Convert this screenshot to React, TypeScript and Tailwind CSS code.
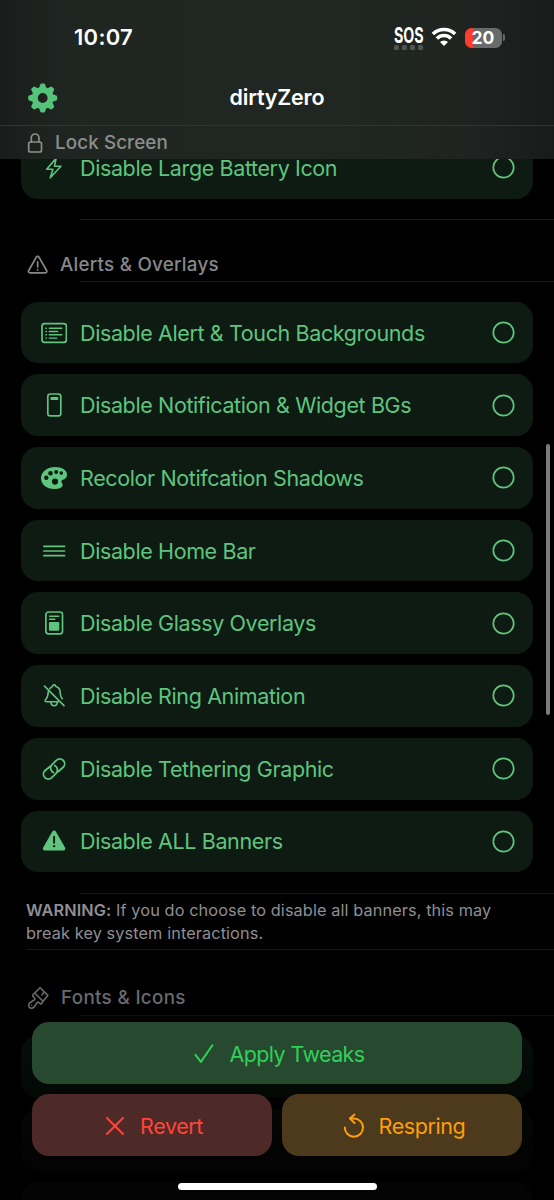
import type { ReactNode } from "react";

const stroke = {
  fill: "none",
  stroke: "currentColor",
  strokeWidth: 1.7,
  strokeLinecap: "round" as const,
  strokeLinejoin: "round" as const,
};

const BoltIcon = () => (
  <svg width="26" height="26" viewBox="0 0 26 26" {...stroke} strokeWidth="1.6">
    <path d="M15.2 3.2 5.700 14.200h6.200l-2.600 8.600 10.600-11.600h-6.400z" />
  </svg>
);

const ListIcon = () => (
  <svg width="26" height="26" viewBox="0 0 26 26" {...stroke}>
    <rect x="1" y="3.600" width="24.400" height="18.800" rx="2.600" />
    <path strokeWidth="1.400" d="M8.300 8.200h12.600M8.300 11.500h8.400M8.300 14.800h12.600M8.300 18.100h7.400M4.900 8.200h.5M4.900 11.500h.5M4.900 14.800h.5M4.900 18.100h.5" />
  </svg>
);

const PhoneIcon = () => (
  <svg width="26" height="26" viewBox="0 0 26 26" {...stroke}>
    <rect x="6.800" y="2" width="13" height="21.800" rx="2.400" />
    <rect x="9.600" y="4.900" width="7.600" height="3.200" rx="0.600" fill="currentColor" stroke="none" />
  </svg>
);

const PaletteIcon = () => (
  <svg width="26" height="26" viewBox="0 0 26 26" fill="currentColor">
    <path
      fillRule="evenodd"
      d="M14.200 2C6.500 2 0 6.800 0 13.300c0 6.300 5.800 10.700 13.200 10.700 5 0 8.500-1.500 8.500-4 0-1.500-1.200-2.200-1.200-3.500 0-1.400 1.100-1.600 2.600-2.200 1.900-.8 2.900-2.300 2.900-4.500C26 5 20.800 2 14.200 2zM5.300 10.600a2.200 2.200 0 1 1 0 4.400 2.200 2.200 0 0 1 0-4.400zM9.500 6a2.300 2.300 0 1 1 0 4.600 2.300 2.300 0 0 1 0-4.600zM15.200 5a2 2 0 1 1 0 4 2 2 0 0 1 0-4zM20.300 6.300a1.800 1.800 0 1 1 0 3.600 1.800 1.800 0 0 1 0-3.600zM14 13.500a3.100 3.100 0 1 1 0 6.200 3.100 3.100 0 0 1 0-6.200z"
    />
  </svg>
);

const LinesIcon = () => (
  <svg width="26" height="26" viewBox="0 0 26 26" {...stroke}>
    <path d="M2.900 8.300h20.600M2.900 13h20.600M2.900 17.700h20.600" />
  </svg>
);

const DocIcon = () => (
  <svg width="26" height="26" viewBox="0 0 26 26" {...stroke}>
    <rect x="4.900" y="2" width="16.600" height="21.800" rx="2.600" />
    <path strokeWidth="1.400" d="M8.500 6.300h9.200M8.500 9.300h5.400" />
    <rect x="7.900" y="12" width="10.400" height="8.700" rx="1" fill="currentColor" stroke="none" />
  </svg>
);

const BellSlashIcon = () => (
  <svg width="26" height="26" viewBox="0 0 26 26" {...stroke} strokeWidth="1.600">
    <path d="M8.700 5.800C9.500 4.500 10.500 4 11.300 3.600 11.600 2.400 12.300 1.900 13.100 1.900s1.500.5 1.800 1.700c2.900.9 4.300 3.300 4.300 6.200 0 2.700.8 4.500 2 6" />
    <path d="M7.300 8.400c-.2 3.900-.6 5.700-2.300 7.600-1.400 1.500-1 2.700.3 2.700H17.300" />
    <path d="M9.800 19.200c.3 2.300 1.400 3.600 3.300 3.600s3-1.300 3.300-3.600" />
    <path d="M3.500 3.100 23 22.600" />
  </svg>
);

const LinkIcon = () => (
  <svg width="26" height="26" viewBox="0 0 26 26" {...stroke} strokeWidth="1.800">
    <path d="M9.300 10.300 3.900 14.700a4.900 4.900 0 0 0 0 6.900 4.900 4.900 0 0 0 6.900 0l4.300-4.300a4.900 4.900 0 0 0-1.400-7.800" />
    <path d="m17 15.800 5.200-4.500a4.900 4.900 0 0 0 0-6.900 4.900 4.900 0 0 0-6.900 0L11 8.700a4.900 4.900 0 0 0 1.400 7.800" />
  </svg>
);

const WarnFillIcon = () => (
  <svg width="26" height="26" viewBox="0 0 26 26">
    <path
      d="M11.200 3.700 2.200 19.400c-.9 1.600-.1 3 1.600 3h18.600c1.700 0 2.500-1.400 1.600-3L15 3.700c-.9-1.500-2.900-1.500-3.800 0z"
      fill="currentColor"
    />
    <path d="M13.100 8.700v6" stroke="#0e1b12" strokeWidth="1.900" strokeLinecap="round" />
    <circle cx="13.100" cy="18.100" r="1.200" fill="#0e1b12" />
  </svg>
);

const RingIcon = () => (
  <svg className="shrink-0" width="23" height="23" viewBox="0 0 23 23" {...stroke}>
    <circle cx="11.500" cy="11.500" r="10.200" />
  </svg>
);

const LockIcon = () => (
  <svg width="18" height="22" viewBox="0 0 18 22" {...stroke}>
    <rect x="2.700" y="10" width="12.800" height="10" rx="1.800" />
    <path d="M5.300 10V5.800a3.800 3.800 0 0 1 7.600 0V10" />
  </svg>
);

const WarnIcon = () => (
  <svg width="22" height="22" viewBox="0 0 22 22" {...stroke}>
    <path d="M9.200 3.300 1.700 16.500c-.7 1.300 0 2.300 1.200 2.300h15.500c1.200 0 1.900-1 1.200-2.300L12.100 3.300c-.7-1.200-2.200-1.200-2.900 0z" />
    <path d="M10.650 7.800v5.200M10.650 15.700v.1" />
  </svg>
);

const BrushIcon = () => (
  <svg width="24" height="26" viewBox="0 0 24 26" {...stroke} strokeWidth="1.600">
    <path d="M14.200 2.700 21.800 10.400 17 16.300 8.700 8z" />
    <path d="M8.700 8 6.900 9.800c-.5.500-.4 1 0 1.500l1.700 2c.5.700.4 1-.3 1.500l-4 2.700a3.300 3.300 0 0 0-.9 4.900 3.300 3.300 0 0 0 4.900-.7l2.800-4c.5-.7.900-.7 1.500-.3l1.700 1.300c.5.400 1 .4 1.400 0L17 16.300" />
    <path d="m18.100 7.300-2.200 2.500M5.700 20.200v.1" />
  </svg>
);

const teeth = [0, 45, 90, 135, 180, 225, 270, 315];

const GearIcon = () => (
  <svg width="31" height="30" viewBox="-0.700 0 31 30" fill="none">
    <circle cx="15" cy="15" r="7.900" stroke="#55c47a" strokeWidth="6" />
    {teeth.map((a) => (
      <path
        key={a}
        transform={`rotate(${a} 15 15)`}
        fill="#55c47a"
        d="M11.300 5.200 12.600 1.400Q12.900.5 13.800.5h2.400q.9 0 1.200.9l1.300 3.800z"
      />
    ))}
  </svg>
);

const WifiIcon = () => (
  <svg width="26" height="20" viewBox="0 0 26 20" fill="none" stroke="#fff" strokeWidth="3.500">
    <path d="M1.900 7.100a15.800 15.800 0 0 1 22.200 0" />
    <path d="M5.900 11.500a10 10 0 0 1 14.200 0" />
    <path d="M13 19 9 15.100a5.600 5.600 0 0 1 8 0z" fill="#fff" stroke="none" />
  </svg>
);

const CheckIcon = () => (
  <svg width="22" height="22" viewBox="0 0 22 22" {...stroke} strokeWidth="2">
    <path d="m2.400 11.900 5.500 7L19.400 2.300" />
  </svg>
);

const CrossIcon = () => (
  <svg width="20" height="20" viewBox="0 0 20 20" {...stroke} strokeWidth="2">
    <path d="m2 2 16 16M18 2 2 18" />
  </svg>
);

const RespringIcon = () => (
  <svg width="22" height="26" viewBox="0 0 22 26" {...stroke} strokeWidth="2">
    <path d="M1.800 14.600a9.100 9.100 0 1 0 9.100-9.100H7.200" />
    <path d="M11.400 1.500 7 5.600l4.500 4.400" />
  </svg>
);

function Row({ icon, label }: { icon: ReactNode; label: string }) {
  return (
    <div className="flex h-[61.700px] shrink-0 items-center rounded-[17px] bg-[#0e1b12] pr-[18.500px] pl-5 text-[#5fc47e]">
      <span className="flex w-[26px] shrink-0 justify-center">{icon}</span>
      <span className="ml-[13px] grow pt-[0.300px] text-[21.500px] tracking-[-0.380px] whitespace-nowrap">{label}</span>
      <RingIcon />
    </div>
  );
}

const rows: { icon: ReactNode; label: string }[] = [
  { icon: <ListIcon />, label: "Disable Alert & Touch Backgrounds" },
  { icon: <PhoneIcon />, label: "Disable Notification & Widget BGs" },
  { icon: <PaletteIcon />, label: "Recolor Notifcation Shadows" },
  { icon: <LinesIcon />, label: "Disable Home Bar" },
  { icon: <DocIcon />, label: "Disable Glassy Overlays" },
  { icon: <BellSlashIcon />, label: "Disable Ring Animation" },
  { icon: <LinkIcon />, label: "Disable Tethering Graphic" },
  { icon: <WarnFillIcon />, label: "Disable ALL Banners" },
];

export default function App() {
  return (
    <div className="relative flex h-[1200px] w-[554px] flex-col overflow-hidden bg-black font-['Inter','Liberation_Sans',sans-serif] text-white">
      <header className="h-[159px] shrink-0 bg-[linear-gradient(90deg,#1a1c1b_0%,#1f2622_12%,#202722_50%,#1f2421_84%,#191b1a_100%)]">
        <div className="flex h-[75px] items-center pr-[49px] pl-[74px]">
          <span className="grow text-[22px] font-semibold tracking-[0.300px]">10:07</span>
          <div className="mr-[4px] flex w-[38px] flex-col items-center">
            <span className="flex h-[17px] origin-center scale-x-[0.680] items-center pt-[3px] text-[21px] leading-none font-bold">
              SOS
            </span>
            <span className="mt-[2px] flex gap-[3px]">
              <i className="size-[5px] rounded-[1.500px] bg-[#505552]" />
              <i className="size-[5px] rounded-[1.500px] bg-[#505552]" />
              <i className="size-[5px] rounded-[1.500px] bg-[#505552]" />
              <i className="size-[5px] rounded-[1.500px] bg-[#505552]" />
            </span>
          </div>
          <div className="-mt-[2px] -ml-px">
            <WifiIcon />
          </div>
          <div className="ml-[8px] flex h-5 w-[37px] items-center justify-center rounded-[6.500px] bg-[linear-gradient(90deg,#ff3b30_0_8px,#686b69_8px)] text-[17.500px] leading-none font-bold">
            20
          </div>
          <span className="ml-px h-[7px] w-[2.500px] rounded-r-full bg-[#686b69]" />
        </div>
        <div className="grid h-[51px] grid-cols-[1fr_auto_1fr] items-center border-b border-[#303432] pb-[5px] pl-[27px]">
          <GearIcon />
          <h1 className="-ml-[27px] text-[21.500px] font-semibold tracking-[-0.200px]">dirtyZero</h1>
        </div>
        <div className="flex h-[33px] items-center pl-[26px] text-[#8b8e8c]">
          <LockIcon />
          <h2 className="ml-[11px] pt-[2px] text-[18.800px] font-medium tracking-[0.120px]">Lock Screen</h2>
        </div>
      </header>

      <main className="flex flex-col">
        <div className="flex h-[39.500px] flex-col justify-end overflow-hidden px-[21px]">
          <Row icon={<BoltIcon />} label="Disable Large Battery Icon" />
        </div>
        <hr className="mt-[20px] ml-[80px] border-[#19191a]" />
        <div className="mt-[29px] flex h-[32px] items-center pl-[27px] text-[#87878b]">
          <WarnIcon />
          <h2 className="ml-[11px] pt-[2px] text-[18.800px] font-medium tracking-[0.240px]">Alerts &amp; Overlays</h2>
        </div>
        <hr className="ml-[80px] border-[#19191a]" />
        <div className="mt-[20.200px] flex flex-col gap-[11px] px-[21px]">
          {rows.map((r) => (
            <Row key={r.label} icon={r.icon} label={r.label} />
          ))}
        </div>
        <hr className="mt-[20.500px] ml-[80px] border-[#19191a]" />
        <p className="mt-[5px] ml-[26px] h-[50.500px] text-[16.300px] leading-[23px] tracking-[0.100px] whitespace-nowrap text-[#8f8f93]">
          <b className="font-semibold">WARNING:</b> If you do choose to disable all banners, this may
          <br />
          break key system interactions.
        </p>
        <hr className="ml-[26px] border-[#171718]" />
        <div className="mt-[31px] flex h-[34px] items-center pl-[26px] text-[#6a6a6e]">
          <BrushIcon />
          <h2 className="ml-[11px] text-[18.800px] font-medium tracking-[0.340px]">Fonts &amp; Icons</h2>
        </div>
        <hr className="ml-[80px] border-[#101011]" />
        <div className="mt-[20px] flex flex-col gap-[11px] px-[21px]">
          <div className="h-[62px] rounded-[17px] bg-linear-to-b from-[#060e09] to-[#030805]" />
          <div className="h-[62px] rounded-[17px] bg-linear-to-b from-[#030704] to-[#020302]" />
          <div className="h-[62px] rounded-[17px] bg-[#030403]" />
        </div>
      </main>

      <div className="absolute top-[444px] right-[4px] h-[271px] w-[4px] rounded-full bg-[#7b7b7b]" />

      <footer className="absolute inset-x-0 bottom-0 flex h-[178px] flex-col gap-[10.500px] px-[32.300px] text-[21.500px] tracking-[-0.600px]">
        <button className="flex h-[61.500px] shrink-0 items-center justify-center gap-[14px] rounded-[17px] bg-[#26492f] pt-[2px] pl-1 text-[#31d05a]">
          <CheckIcon />
          Apply Tweaks
        </button>
        <div className="grid grid-cols-2 gap-[10.500px] tracking-[-0.400px]">
          <button className="flex h-[61.500px] items-center justify-center gap-[15px] rounded-[17px] bg-[#4d2927] pt-[2px] pl-1 text-[#ff453a]">
            <CrossIcon />
            Revert
          </button>
          <button className="flex h-[61.500px] items-center justify-center gap-[14px] rounded-[17px] bg-[#4d391c] pt-[2px] pl-1 text-[#ff9f0a]">
            <RespringIcon />
            Respring
          </button>
        </div>
        <div className="mt-[17px] h-[7px] w-[199px] shrink-0 self-center rounded-full bg-white" />
      </footer>
    </div>
  );
}
